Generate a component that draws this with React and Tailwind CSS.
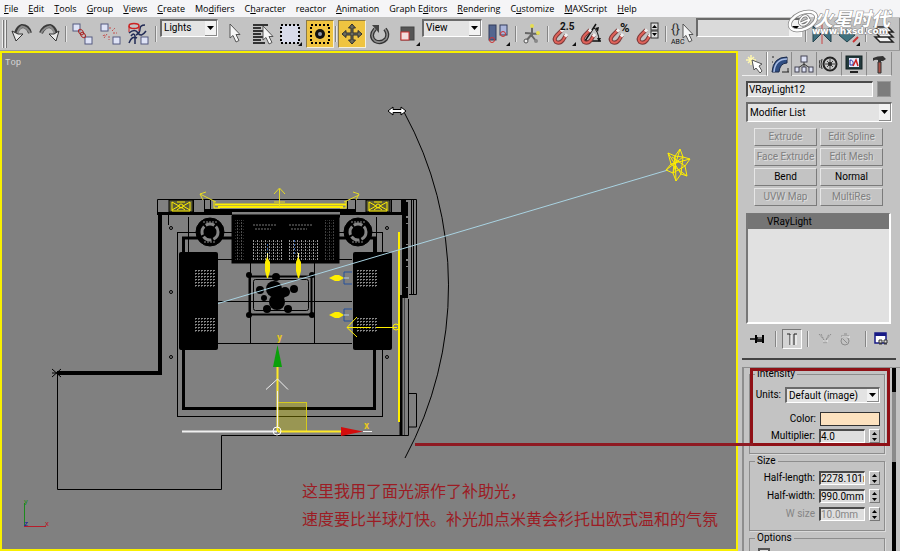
import { useState } from "react";
import clsx from "clsx";

const MENUS = [
  ["F", "ile"],
  ["E", "dit"],
  ["T", "ools"],
  ["G", "roup"],
  ["V", "iews"],
  ["C", "reate"],
  ["", "Mo", "d", "ifiers"],
  ["", "C", "h", "aracter"],
  ["", "reactor"],
  ["A", "nimation"],
  ["", "Graph E", "d", "itors"],
  ["R", "endering"],
  ["", "C", "u", "stomize"],
  ["M", "AXScript"],
  ["H", "elp"],
];

const MODIFIERS = [
  { name: "Extrude", enabled: false },
  { name: "Edit Spline", enabled: false },
  { name: "Face Extrude", enabled: false },
  { name: "Edit Mesh", enabled: false },
  { name: "Bend", enabled: true },
  { name: "Normal", enabled: true },
  { name: "UVW Map", enabled: false },
  { name: "MultiRes", enabled: false },
];

/* ---------- small controls ---------- */

function Separator({ className = "w-1" }) {
  return (
    <div className={clsx("flex h-4 shrink-0 justify-center", className)}>
      <div className="w-px bg-[#858585]" />
      <div className="w-px bg-[#e8e8e8]" />
    </div>
  );
}

function ToolButton({ label, active, className = "w-7", children }) {
  return (
    <button
      type="button"
      aria-label={label}
      className={clsx(
        "flex h-7 shrink-0 items-center justify-center",
        active && "border border-[#8c7a45] border-r-[#f4f0dc] border-b-[#f4f0dc] bg-[#efc441]",
        className
      )}
    >
      <svg width="24" height="24" viewBox="0 0 24 24" fill="none" className="shrink-0 overflow-visible">
        {children}
      </svg>
    </button>
  );
}

function Select({ label, options, className }) {
  return (
    <div
      className={clsx(
        "relative shrink-0 border-t-2 border-l-2 border-[#6a6a6a] border-r border-b border-r-white border-b-white bg-[#e3e3e3]",
        className
      )}
    >
      <select aria-label={label} className="block h-full w-full appearance-none bg-transparent pl-0.5 leading-3 outline-none">
        {options.map((o) => (
          <option key={o}>{o}</option>
        ))}
      </select>
      <span className="pointer-events-none absolute inset-y-0 right-0 flex w-3 items-center justify-center border-r border-b border-[#8a8a8a] bg-[#f2f2f2]">
        <svg width="7" height="4" viewBox="0 0 7 4">
          <path d="M0 0h7L3.5 4z" fill="#000" />
        </svg>
      </span>
    </div>
  );
}

function Spinner({ label, value, disabled }) {
  const [val, setVal] = useState(value);
  return (
    <div className="flex h-[18px] items-center">
      <label
        htmlFor={label}
        className={clsx("flex-1 pr-1 text-right", disabled && "text-[#858585]")}
      >
        {label}
      </label>
      <input
        id={label}
        value={val}
        disabled={disabled}
        onChange={(e) => setVal(e.target.value)}
        className={clsx(
          "h-[14px] w-[46px] border-t-2 border-l-2 border-r border-b border-[#4a4a4a] border-r-white border-b-white bg-[#dedede] leading-3 outline-none",
          disabled && "text-[#858585]"
        )}
      />
      <div className="ml-1 flex h-[14px] w-[11px] flex-col border border-white border-r-[#777] border-b-[#777]">
        <button type="button" aria-label={`Increase ${label}`} className="flex flex-1 items-center justify-center">
          <svg width="5" height="3" viewBox="0 0 5 3"><path d="M0 3h5L2.5 0z" /></svg>
        </button>
        <button type="button" aria-label={`Decrease ${label}`} className="flex flex-1 items-center justify-center">
          <svg width="5" height="3" viewBox="0 0 5 3"><path d="M0 0h5L2.5 3z" /></svg>
        </button>
      </div>
    </div>
  );
}

function Group({ title, className, children }) {
  return (
    <fieldset className={clsx("border border-[#8d8d8d] px-1 shadow-[1px_1px_0_#dadada]", className)}>
      <legend className="ml-px px-0.5 leading-3">{title}</legend>
      {children}
    </fieldset>
  );
}

/* ---------- toolbar drawings ---------- */

const Flyout = () => <path d="M24 20v4h-4z" fill="#111" />;

const Box = ({ x, y }) => (
  <rect x={x} y={y} width="7" height="7" fill="#dfe3f6" stroke="#555a80" />
);

const Magnet = () => (
  <>
    <path d="M10 8L5 13Q1 17 4 20Q8 22 11 18L14 13" stroke="#7d3a3a" strokeWidth="4" />
    <path d="M10 8L5 13Q1 17 4 20Q8 22 11 18L14 13" stroke="#e0635a" strokeWidth="2" />
    <path d="M9 9.500L11 7.500M13 14.500L15 12" stroke="#f0f0f0" strokeWidth="3" />
  </>
);

const Arrow = ({ x = 0, y = 0 }) => (
  <path
    transform={`translate(${x} ${y})`}
    d="M0 0L0 14L3 11.500L6 18L9 16.500L6 10.500L10 10.500Z"
    fill="#f6f6f6"
    stroke="#555"
  />
);

function Toolbar() {
  return (
    <div className="flex h-[34px] shrink-0 items-center border-b border-[#9a9a9a] bg-[#c3c3c3]">
      <div className="flex h-7 w-2 shrink-0 gap-px pl-0.5">
        <div className="w-0.5 border-r border-[#777] bg-[#eee]" />
        <div className="w-0.5 border-r border-[#777] bg-[#eee]" />
      </div>
      <ToolButton label="Undo">
        <path d="M20 11Q18 4 12 4Q8 5 6 11" stroke="#3a3a3a" strokeWidth="4" />
        <path d="M20 11Q17 5 12 4.500Q9 6 7 12" stroke="#8b8b8b" strokeWidth="2" />
        <path d="M2 9L6 19L13 12L8 12Z" fill="#e8e8e8" stroke="#333" />
      </ToolButton>
      <ToolButton label="Redo">
        <path d="M3 11Q6 4 12 4Q16 5 18 11" stroke="#3a3a3a" strokeWidth="4" />
        <path d="M3 11Q7 5 12 4.500Q15 6 17 12" stroke="#8b8b8b" strokeWidth="2" />
        <path d="M21 9L18 19L11 12L16 12Z" fill="#e8e8e8" stroke="#333" />
      </ToolButton>
      <Separator />
      <ToolButton label="Select and Link">
        <Box x={3} y={2} />
        <Box x={15} y={15} />
        <ellipse cx="11" cy="10" rx="2" ry="3" stroke="#a92a2a" transform="rotate(-40 11 10)" />
        <ellipse cx="13" cy="13" rx="2" ry="3" stroke="#a92a2a" transform="rotate(-40 13 13)" />
      </ToolButton>
      <ToolButton label="Unlink Selection">
        <Box x={3} y={2} />
        <Box x={15} y={15} />
        <path d="M14 9l3-3M15 11h4M9 12l-3 4M11 14v4M12 7V4M7 13l-3 1" stroke="#c4504f" strokeDasharray="2 1" />
      </ToolButton>
      <ToolButton label="Bind to Space Warp">
        <path d="M3 11Q9 6 12 11T20 9M3 21Q6 13 11 16M19 3Q14 3 14 7T10 13M5 14Q8 10 9 14V22" stroke="#222b55" strokeWidth="1.500" />
        <ellipse cx="8" cy="4" rx="5" ry="2.500" stroke="#c22" strokeWidth="1.500" />
        <path d="M3 4v6M13 4v5" stroke="#c22" />
        <Box x={15} y={15} />
      </ToolButton>
      <Separator className="w-2" />
      <Select label="Selection filter" options={["Lights"]} className="mb-3 h-[18px] w-[58px]" />
      <ToolButton label="Select Object" className="w-8">
        <Arrow x={8} y={2} />
      </ToolButton>
      <ToolButton label="Select by Name" className="w-6">
        <path d="M3 3h15M3 6h8M3 9h11M3 12h8M3 15h11M3 18h8M3 21h12" stroke="#333" strokeWidth="2" />
        <Arrow x={13} y={4} />
      </ToolButton>
      <ToolButton label="Selection Region" className="w-8">
        <rect x="3" y="3" width="18" height="18" fill="#d8dbea" stroke="#000" strokeWidth="2" strokeDasharray="2 2" />
        <Flyout />
      </ToolButton>
      <ToolButton label="Window / Crossing" active>
        <rect x="3" y="3" width="18" height="18" stroke="#000" strokeWidth="2" strokeDasharray="2 2" />
        <circle cx="12" cy="12" r="5" fill="#111" />
        <circle cx="12" cy="12" r="2" fill="#8d97a8" />
      </ToolButton>
      <Separator />
      <ToolButton label="Select and Move" active>
        <path
          d="M12 2L15.500 6H13V11H18V8.500L22 12L18 15.500V13H13V18H15.500L12 22L8.500 18H11V13H6V15.500L2 12L6 8.500V11H11V6H8.500Z"
          fill="#6b6b5c"
          stroke="#2f2f2f"
        />
      </ToolButton>
      <ToolButton label="Select and Rotate">
        <path d="M7 7Q1 14 7 19Q13 22 18 17Q21 12 17 7" stroke="#333" strokeWidth="4" />
        <path d="M7 7Q1 14 7 19Q13 22 18 17Q21 12 17 7" stroke="#8e8e8e" strokeWidth="1.500" />
        <path d="M4 3L11 3L11 11Z" fill="#444" />
      </ToolButton>
      <ToolButton label="Select and Scale">
        <rect x="5" y="5" width="13" height="13" fill="#555" stroke="#444" />
        <rect x="5" y="10" width="8" height="8" fill="#f2dede" stroke="#c33" />
        <Flyout />
      </ToolButton>
      <Select label="Reference coordinate system" options={["View"]} className="mb-3 h-[18px] w-[60px]" />
      <ToolButton label="Use Pivot Point Center" className="w-8">
        <rect x="3" y="3" width="7" height="15" fill="#53658f" stroke="#333c5c" />
        <rect x="14" y="3" width="7" height="10" fill="#aab5db" stroke="#333c5c" />
        <circle cx="6" cy="18" r="2.500" stroke="#c33" />
        <circle cx="17" cy="12" r="2.500" stroke="#c33" />
        <Flyout />
      </ToolButton>
      <Separator />
      <ToolButton label="Select and Manipulate">
        <path d="M12 4V15M12 12L6 19M5 11l14 1M12 14l4 5" stroke="#666" strokeWidth="2" />
        <circle cx="12" cy="4" r="2" fill="#e6dd51" />
        <circle cx="18" cy="11" r="2" fill="#e6dd51" />
        <circle cx="6" cy="19" r="2" fill="#eee" stroke="#555" />
        <circle cx="16" cy="19" r="2" fill="#888" />
      </ToolButton>
      <Separator />
      <ToolButton label="Snaps Toggle">
        <Magnet />
        <text x="8" y="8" fontSize="10" fontWeight="bold" fill="#111">2.5</text>
        <Flyout />
      </ToolButton>
      <ToolButton label="Angle Snap Toggle">
        <path d="M16 2L5 19H21" stroke="#111" strokeWidth="1.500" />
        <path d="M13 5Q19 10 19 19" stroke="#111" />
        <path d="M15 6l4-1-1 5zM17 16h4l-2 4z" fill="#111" />
        <Magnet />
      </ToolButton>
      <ToolButton label="Percent Snap Toggle">
        <Magnet />
        <text x="12" y="10" fontSize="13" fontWeight="bold" fill="#111">%</text>
      </ToolButton>
      <ToolButton label="Spinner Snap Toggle">
        <Magnet />
        <rect x="15" y="1" width="7" height="7" fill="#ddd" stroke="#333" />
        <rect x="15" y="9" width="7" height="7" fill="#ddd" stroke="#333" />
        <path d="M16 6h5L18.500 3zM16 11h5l-2.500 3z" fill="#000" />
      </ToolButton>
      <Separator className="w-2" />
      <ToolButton label="Edit Named Selection Sets" className="w-6">
        <text x="1" y="11" fontSize="13" fill="#333">{"{}"}</text>
        <text x="1" y="22" fontSize="7" fill="#111">ABC</text>
        <Arrow x={13} y={2} />
      </ToolButton>
      <div className="relative mb-3 ml-0.5 h-[19px] min-w-0 flex-1 border-t-2 border-l-2 border-[#6a6a6a] border-r border-b border-r-white border-b-white bg-[#dadada]">
        <input aria-label="Named selection sets" className="block h-full w-full bg-transparent px-1 outline-none" />
        <span className="pointer-events-none absolute inset-y-0 right-0 flex w-3 items-center justify-center bg-[#f2f2f2]">
          <svg width="7" height="4" viewBox="0 0 7 4"><path d="M0 0h7L3.500 4z" /></svg>
        </span>
      </div>
      <Separator className="w-2" />
      <ToolButton label="Mirror" className="w-6">
        <path d="M3 4L11 12L3 20Z" fill="#3f6d7c" stroke="#24454f" />
        <path d="M21 4L13 12L21 20Z" fill="#3f6d7c" stroke="#24454f" />
        <path d="M12 2V22" stroke="#c44" />
      </ToolButton>
      <ToolButton label="Align">
        <path d="M3 13L10 7L19 13L11 20Z" fill="#3f7380" stroke="#24454f" />
        <path d="M17 20L22 15" stroke="#c33" strokeWidth="2" />
        <Flyout />
      </ToolButton>
      <Separator className="w-2" />
      <ToolButton label="Layer Manager">
        <path d="M3 15L8 20H21L16 15ZM3 10L8 15H21L16 10ZM3 5L8 10H21L16 5Z" fill="#f2f2f2" stroke="#222" strokeWidth="1.500" />
      </ToolButton>
      <div className="ml-px h-8 w-px shrink-0 bg-[#888]" />
    </div>
  );
}

/* ---------- site stamp over the toolbar ---------- */

function Watermark() {
  return (
    <svg
      className="pointer-events-none absolute top-[6px] right-0 overflow-visible"
      width="112"
      height="32"
      viewBox="0 0 112 32"
      fill="none"
    >
      <g transform="rotate(-24 15 15)">
        <ellipse cx="15" cy="15" rx="14" ry="8" stroke="#858585" strokeWidth="4" />
        <ellipse cx="15" cy="15" rx="14" ry="8" stroke="#fff" strokeWidth="2.500" />
        <path d="M12 16H21Q22 10 16 11Q9 14 12 18Q16 21 22 16" stroke="#777" strokeWidth="3" />
        <path d="M12 16H21Q22 10 16 11Q9 14 12 18Q16 21 22 16" stroke="#fff" strokeWidth="1.500" />
      </g>
      <text
        x="26"
        y="20"
        fontSize="19"
        fontStyle="italic"
        fontWeight="bold"
        fill="#fff"
        stroke="#888"
        strokeWidth="1"
        paintOrder="stroke"
        className="font-['Noto_Sans_CJK_SC',sans-serif]"
      >
        火星时代
      </text>
      <text
        x="24"
        y="28"
        fontSize="9"
        fontWeight="bold"
        fill="#fff"
        stroke="#8a8a8a"
        strokeWidth="1"
        paintOrder="stroke"
        className="font-['DejaVu_Sans',sans-serif]"
      >
        www.hxsd.com
      </text>
    </svg>
  );
}

/* ---------- top viewport ---------- */

function Lamp({ x, y }) {
  return (
    <g>
      <circle cx={x} cy={y} r="14" fill="#000" />
      <circle cx={x} cy={y} r="8" fill="none" stroke="#858585" strokeWidth="3" strokeDasharray="9 2" />
      <path d={`M${x - 6} ${y + 10}h12M${x - 7} ${y - 10}h14`} stroke="#8a8a8a" strokeDasharray="2 1" />
      <circle cx={x} cy={y} r="3" fill="#000" />
    </g>
  );
}

function Sofa({ x, weaveX }) {
  return (
    <g>
      <rect x={x} y="252" width="39" height="98" rx="2" fill="#000" />
      <rect x={weaveX} y="269" width="20" height="18" fill="url(#weave)" />
      <rect x={weaveX} y="317" width="20" height="16" fill="url(#weave)" />
    </g>
  );
}

function DownLight({ x }) {
  return (
    <g>
      <path d={`M${x}.5 253v6`} stroke="#fff8a0" />
      <path d={`M${x} 257l3 5v9l-2 7h-1l-2-7v-9z`} fill="#ffee00" stroke="none" />
    </g>
  );
}

function SideLight({ y }) {
  return (
    <g>
      <path d={`M352 ${y - 6}h-8v12h8`} stroke="#24509c" fill="none" />
      <path d={`M329 ${y}l6-3h4l5 3-5 3h-4z`} fill="#ffee00" stroke="none" />
      <path d={`M344 ${y}h5`} stroke="#b9cfe4" />
    </g>
  );
}

function CeilingLight({ x }) {
  return (
    <g>
      <rect x={x - 12} y="200" width="24" height="12" fill="#5c5c38" stroke="#000" />
      <path
        d={`M${x - 9} 202v9h18v-9M${x - 9} 202l7 4-7 4M${x + 9} 202l-7 4 7 4M${x - 4} 202h8M${x - 4} 210l4-3 4 3`}
        stroke="#ffee00"
        fill="none"
      />
      <circle cx={x} cy="206" r="2" stroke="#ffee00" fill="none" />
    </g>
  );
}

function Scene() {
  return (
    <svg
      className="absolute inset-0 h-full w-full"
      viewBox="2 53 734 496"
      preserveAspectRatio="xMinYMin meet"
      fill="none"
      stroke="#000"
      strokeWidth="1"
    >
      <defs>
        <pattern id="weave" width="3" height="3" patternUnits="userSpaceOnUse">
          <rect width="2" height="1" x="0" y="0" fill="#8a8a8a" stroke="none" />
          <rect width="1" height="1" x="0" y="1" fill="#555" stroke="none" />
        </pattern>
        <pattern id="mesh" width="4" height="3" patternUnits="userSpaceOnUse">
          <rect width="1" height="2" x="1" y="0" fill="#9a9a9a" stroke="none" />
          <rect width="1" height="1" x="3" y="1" fill="#555" stroke="none" />
        </pattern>
      </defs>

      {/* outer walls */}
      <path d="M157.500 214V199.500H416.500V294.500H409M169.500 200v13M193.500 200v13M204.500 200v13M210.500 200v13M347.500 200v13M355.500 200v13M366.500 200v13M391.500 200v13M401.500 200v13" />
      <path d="M157 213.500H232M340 213.500H404" strokeWidth="3" />
      <path d="M160 213V373H57" strokeWidth="4" />
      <path d="M205 210.500H355M232 216H340" strokeWidth="3" />
      <path d="M57.500 373V489.500H221.500V435.500H408.500V299M416.500 393.500H408.500M408.500 427H416.500V393.500" />
      <path d="M52 369l9 8M61 369l-9 8M52 373h9" />
      <path d="M404 200V298" strokeWidth="4" />
      <path d="M407 202V298" strokeWidth="2" strokeDasharray="14 2 5 1 20 1" />
      <path d="M411.500 200V294M413.500 200V294" />
      <path d="M401 295V435" strokeWidth="3" />
      <path d="M404.500 298V435" stroke="#444" />

      {/* floor outline */}
      <rect x="177.500" y="232.500" width="205" height="184" />
      <rect x="183.500" y="238" width="191" height="170.500" strokeWidth="3" />
      <path d="M188.500 217V252M168.500 214V225M376.500 217V252M218 259.500H352M218 301.500H352M218 343.500H352M250.500 263V343M314.500 263V343" />
      {[[171, 228], [171, 292], [171, 357], [387, 228], [387, 357]].map(([x, y]) => (
        <circle key={`${x}-${y}`} cx={x} cy={y} r="1.500" />
      ))}

      {/* furniture */}
      <rect x="232" y="216" width="107" height="47" fill="#000" />
      <rect x="235" y="220" width="9" height="40" fill="url(#mesh)" stroke="none" opacity="0.5" />
      <rect x="253" y="239" width="30" height="22" fill="url(#mesh)" stroke="none" />
      <rect x="288" y="239" width="30" height="22" fill="url(#mesh)" stroke="none" />
      <path d="M253 225h24M289 225h24M255 229h16M291 229h16" stroke="#777" strokeDasharray="2 1" />
      <path d="M267.500 244v14M294.500 240v16" stroke="#315ea5" strokeDasharray="2 2" />
      <rect x="325" y="220" width="10" height="40" fill="url(#mesh)" stroke="none" opacity="0.4" />
      <Lamp x={210} y={232} />
      <Lamp x={358} y={232} />
      <g stroke="none">
        <Sofa x={179} weaveX={195} />
        <Sofa x={353} weaveX={357} />
      </g>
      <rect x="249.500" y="276.500" width="62" height="38" strokeWidth="2" />
      <rect x="253.500" y="279.500" width="55" height="31" rx="2" />
      <g fill="#000" stroke="none">
        {[[249, 275, 3], [312, 275, 3], [249, 315, 3], [312, 315, 3], [276, 277, 4], [260, 290, 4], [274, 289, 8], [285, 292, 5], [294, 289, 4], [264, 298, 3], [277, 302, 8], [267, 309, 4], [288, 309, 4], [281, 294, 5]].map(
          ([x, y, r]) => (
            <circle key={`${x}-${y}`} cx={x} cy={y} r={r} />
          )
        )}
      </g>

      {/* photometric lights */}
      <path d="M215 204.500H346M218 207H343" stroke="#ffee00" strokeWidth="2" />
      <path d="M214 201V208H220M346 201V208H340" stroke="#ffee00" />
      <path d="M279.500 207V189M274 194l5.500-6 5.500 6M274 202h11" stroke="#e6db24" />
      <path d="M216 202L200 194M206 192l-6 2 3 6M344 202L359 195M353 192l6 2-3 6" stroke="#e6db24" />
      <CeilingLight x={181} />
      <CeilingLight x={378} />
      <DownLight x={267} />
      <DownLight x={298} />
      <SideLight y={278} />
      <SideLight y={315} />
      <path d="M399 232V422" stroke="#ffee00" strokeWidth="2" />
      <path d="M347 327.500H371M376 327.500H397M357 317L347 327.500L357 337" stroke="#ffee00" />
      <circle cx="396" cy="327" r="3" stroke="#ffee00" />

      {/* light cone and target line */}
      <path d="M404 112A362 362 0 0 1 405 458" />
      <path d="M218 303.500L668 170" stroke="#a9d3e2" />
      <g stroke="#ffee00">
        <path d="M668 153L675 156L680 149L683 157L690 159L685 166L687 176L681 174L676 181L673 173L666 170L671 164Z" />
        <path d="M668 153L681 174M680 149L673 173M690 159L671 164M666 170L683 157M676 181L675 156M687 176L671 164" />
        <path d="M672 157L685 166L673 173L675 156L683 157L681 174" />
      </g>

      {/* resize cursor */}
      <path d="M388 111l5-4v2.500h8V107l5 4-5 4v-2.500h-8V115z" fill="#fff" />

      {/* move gizmo */}
      <rect x="277.500" y="402.500" width="29" height="29" fill="#c8c000" fillOpacity="0.35" stroke="#d4ca1c" />
      <path d="M182 431.500H277" stroke="#f0f0f0" strokeWidth="2" />
      <path d="M277.500 431V366M278 431.500H342" stroke="#ffe926" strokeWidth="2" />
      <path d="M277.500 427V391M266 389.500L277.500 379L288 389.500M363 431.500h9" stroke="#f0f0f0" />
      <circle cx="277" cy="431" r="4" stroke="#fff" />
      <path d="M277.500 345L282 367H273Z" fill="#0aa00a" stroke="none" />
      <path d="M363 431.500L341 427V436Z" fill="#d40d0d" stroke="none" />
      <g stroke="none" fill="#e8c71e" fontSize="10" fontWeight="bold">
        <text x="277" y="341">y</text>
        <text x="364" y="429">x</text>
      </g>

      {/* world axis */}
      <path d="M24.500 526V503" stroke="#1c8a1c" />
      <path d="M24 526.500H46" stroke="#b81c2a" />
      <g stroke="none" fontSize="8">
        <text x="24" y="504" fill="#1c8a1c">y</text>
        <text x="45" y="526" fill="#b81c2a">x</text>
        <text x="24" y="526" fill="#14149a">z</text>
      </g>
    </svg>
  );
}

function Viewport() {
  return (
    <section className="relative min-w-0 flex-1 border-2 border-[#f8f000] bg-[#808080]">
      <Scene />
      <span className="absolute top-0.5 left-[3px] font-['Liberation_Mono',monospace] text-[9px] leading-4 text-[#d8d8d8]">
        Top
      </span>
      <p className="absolute top-[423px] left-[300px] font-['Noto_Sans_CJK_SC',sans-serif] text-base leading-7 whitespace-nowrap text-[#9c1c24]">
        这里我用了面光源作了补助光，
        <br />
        速度要比半球灯快。补光加点米黄会衫托出欧式温和的气氛
      </p>
    </section>
  );
}

/* ---------- command panel ---------- */

const TABS = [
  {
    label: "Create",
    art: (
      <>
        <path d="M7 1v10M2 6h10M4 3l6 6M10 3l-6 6" stroke="#fff8b0" strokeWidth="1.500" />
        <path d="M8 6L10 16L12 14L16 19L18 17L15 12L18 10Z" fill="#fff" stroke="#555" />
      </>
    ),
  },
  {
    label: "Modify",
    active: true,
    art: (
      <>
        <path d="M2 18Q3 3 17 3V9Q10 9 9 18Z" fill="#2f4d82" stroke="#1c2b4b" />
        <path d="M4 18Q5 5 17 5" stroke="#a9bde4" strokeWidth="1.500" />
        <path d="M2 3h2M2 8h1M18 14v4M12 18h7" stroke="#222" />
      </>
    ),
  },
  {
    label: "Hierarchy",
    art: (
      <>
        <path d="M10 8v5M4 14l6-4 6 4" stroke="#333" />
        <rect x="7" y="2" width="6" height="6" fill="#dfe3f6" stroke="#445" />
        <rect x="1" y="13" width="4" height="5" fill="#dfe3f6" stroke="#445" />
        <rect x="8" y="13" width="4" height="5" fill="#dfe3f6" stroke="#445" />
        <rect x="15" y="13" width="4" height="5" fill="#dfe3f6" stroke="#445" />
      </>
    ),
  },
  {
    label: "Motion",
    art: (
      <>
        <circle cx="11" cy="10" r="6.500" fill="#c8c8c8" stroke="#222" strokeWidth="2" />
        <path d="M11 5v10M6 10h10M8 7l6 6M14 7l-6 6" stroke="#444" />
        <circle cx="11" cy="10" r="2" fill="#222" />
        <path d="M3 5Q1 10 3 15M1 6Q-1 10 1 14" stroke="#333" />
      </>
    ),
  },
  {
    label: "Display",
    art: (
      <>
        <rect x="2" y="2" width="16" height="13" fill="#233a3d" stroke="#132022" />
        <rect x="5" y="4" width="10" height="9" fill="#e9ebfb" />
        <path d="M6 6v5M6 6q4 0 3 5H6" stroke="#2737a6" />
        <path d="M9 12l3-6 2 6" stroke="#c22" strokeWidth="1.500" />
        <path d="M6 18h8" stroke="#222" strokeWidth="2" />
      </>
    ),
  },
  {
    label: "Utilities",
    art: (
      <>
        <path d="M4 7V4Q8 2 14 2L17 5L14 7H12V8H9V6Q6 5 4 7Z" fill="#333" />
        <path d="M9 8h3v11H9Z" fill="#a85248" stroke="#333" />
      </>
    ),
  },
];

function PanelTabs() {
  return (
    <div className="flex h-[25px] shrink-0 pt-px pl-1" role="tablist">
      {TABS.map((t) => (
        <button
          key={t.label}
          type="button"
          role="tab"
          aria-label={t.label}
          aria-selected={!!t.active}
          className={clsx(
            "flex w-[25px] items-center justify-center border-r border-[#8a8a8a]",
            !t.active && "border-b border-b-[#eee]",
            t.active && "border-l border-l-white"
          )}
        >
          <svg width="20" height="20" viewBox="0 0 20 20" fill="none">
            {t.art}
          </svg>
        </button>
      ))}
    </div>
  );
}

function StackTools() {
  return (
    <div className="mt-1 flex h-[22px] shrink-0 items-center pl-3">
      <button type="button" aria-label="Pin Stack" className="mr-2 w-4">
        <svg width="16" height="12" viewBox="0 0 16 12" fill="none">
          <path d="M0 6h6" stroke="#000" strokeWidth="1.500" />
          <path d="M6 2v8M13 2v8" stroke="#000" strokeWidth="2" />
          <path d="M7 4h5v5H7z" fill="#222" />
          <path d="M8 5h4" stroke="#aaa" />
        </svg>
      </button>
      <Separator />
      <button
        type="button"
        aria-label="Show end result"
        aria-pressed="true"
        className="ml-1 flex h-5 w-5 items-center justify-center border border-[#777] border-r-white border-b-white bg-[#d4d4d4]"
      >
        <svg width="12" height="14" viewBox="0 0 12 14" fill="none">
          <path d="M1 2h3v11M8 13V2h3" stroke="#222" />
          <path d="M5 3v10M10 3v10" stroke="#fff" />
        </svg>
      </button>
      <Separator className="ml-1 w-1" />
      <button type="button" aria-label="Make unique" disabled className="ml-2 w-4">
        <svg width="14" height="14" viewBox="0 0 14 14" fill="none">
          <path d="M1 2l5 6v4M13 2L8 8v4M3 2l4 8 4-8" stroke="#8c8c8c" strokeDasharray="2 1" />
          <path d="M5 9h5" stroke="#eee" />
        </svg>
      </button>
      <button type="button" aria-label="Remove modifier" disabled className="ml-1 w-4">
        <svg width="14" height="14" viewBox="0 0 14 14" fill="none">
          <circle cx="7" cy="9" r="4" stroke="#8c8c8c" />
          <path d="M3 4h8M6 2h3M5 7l4 4" stroke="#8c8c8c" />
          <path d="M4 5h8" stroke="#eee" />
        </svg>
      </button>
      <Separator className="ml-2 w-2" />
      <button type="button" aria-label="Configure Modifier Sets" className="ml-1 w-4">
        <svg width="15" height="14" viewBox="0 0 15 14" fill="none">
          <rect x="1" y="1" width="11" height="10" fill="#fff" stroke="#171a86" strokeWidth="1.500" />
          <path d="M1 2.500h11" stroke="#171a86" strokeWidth="3" />
          <path d="M5 8h3v3h-3zM10 8h3v3h-3zM5 12h3M10 12h3" stroke="#333" fill="#ddd" />
        </svg>
      </button>
    </div>
  );
}

function Rollout() {
  return (
    <div className="relative mt-[7px] ml-1 flex min-h-0 flex-1 border-t border-l-2 border-[#8d8d8d]">
      <div className="min-w-0 flex-1 pl-[5px]">
        <Group title="Intensity" className="h-[86px]">
          <div className="mt-[7px] flex items-center justify-end gap-1">
            <span>Units:</span>
            <Select label="Units" options={["Default (image)"]} className="h-4 w-[95px]" />
          </div>
          <div className="mt-2 flex h-4 items-center justify-end gap-1">
            <span>Color:</span>
            <button type="button" aria-label="Light color" className="h-[14px] w-[60px] border border-[#333] bg-[#fde2bf]" />
          </div>
          <Spinner label="Multiplier:" value="4.0" />
        </Group>
        <Group title="Size" className="mt-px h-[76px]">
          <div className="mt-0.5">
            <Spinner label="Half-length:" value="2278.101mm" />
            <Spinner label="Half-width:" value="990.0mm" />
            <Spinner label="W size" value="10.0mm" disabled />
          </div>
        </Group>
        <Group title="Options" className="mt-px h-20">
          <input type="checkbox" aria-label="Double-sided" className="mt-1 ml-1 block h-3 w-3 appearance-none border-2 border-[#555] bg-[#ddd]" />
        </Group>
      </div>
      {/* scroll track */}
      <div className="mr-1 ml-[7px] flex w-1 flex-col bg-black">
        <div className="mt-6 h-[70px] bg-[#8a8a8a]" />
      </div>
      {/* callout drawn over the intensity group */}
      <div className="pointer-events-none absolute top-0 right-[10px] left-[6px] h-[78px] border-[3px] border-[#8f1016]">
        <div className="absolute right-full -bottom-[3px] h-[3px] w-[338px] bg-[#8f1a22]" />
      </div>
    </div>
  );
}

function CommandPanel() {
  const [name, setName] = useState("VRayLight12");
  return (
    <aside className="flex w-[162px] shrink-0 flex-col bg-[#c3c3c3]">
      <PanelTabs />
      <div className="mt-[5px] flex shrink-0 items-center gap-1 pr-[9px] pl-2">
        <input
          aria-label="Object name"
          value={name}
          onChange={(e) => setName(e.target.value)}
          className="h-4 min-w-0 flex-1 border-t-2 border-l-2 border-r border-b border-[#4a4a4a] border-r-white border-b-white bg-[#e3e3e3] px-px outline-none"
        />
        <button type="button" aria-label="Object color" className="h-4 w-[14px] border border-[#999] bg-[#7c7c7c]" />
      </div>
      <Select label="Modifier List" options={["Modifier List"]} className="mt-[5px] mr-2 ml-2 h-5" />
      <div className="mt-1.5 mr-[17px] ml-4 grid shrink-0 grid-cols-2 gap-x-[3px] gap-y-0.5">
        {MODIFIERS.map((m) => (
          <button
            key={m.name}
            type="button"
            disabled={!m.enabled}
            className="h-[18px] border border-[#e6e6e6] border-r-[#7b7b7b] border-b-[#7b7b7b] leading-3 whitespace-nowrap disabled:text-[#808080] disabled:[text-shadow:1px_1px_0_#dedede]"
          >
            {m.name}
          </button>
        ))}
      </div>
      <ul className="mt-[7px] mr-[9px] ml-2 h-[111px] shrink-0 border-2 border-t border-[#777] border-r-white border-b-white bg-[#e1e1e1]">
        <li className="h-[15px] bg-[#757575] pl-[19px] leading-[15px]">VRayLight</li>
      </ul>
      <StackTools />
      <div className="mt-2 mr-1 ml-1 h-0.5 shrink-0 bg-[#444]" />
      <Rollout />
    </aside>
  );
}

export default function App() {
  return (
    <div className="relative flex h-screen flex-col overflow-hidden bg-[#c3c3c3] font-['Roboto',sans-serif] text-[10px] leading-3 text-black">
      <nav className="flex h-[17px] shrink-0 items-center gap-2.5 bg-[#f5f5f7] pl-1 font-['Open_Sans',sans-serif] text-[9px] leading-4">
        {MENUS.map(([key, text, mid, rest]) => (
          <a key={key + text + (rest || "")} href="#" className="whitespace-nowrap">
            {key && <span className="underline">{key}</span>}
            {text}
            {mid && <span className="underline">{mid}</span>}
            {rest}
          </a>
        ))}
      </nav>
      <Toolbar />
      <main className="flex min-h-0 flex-1">
        <Viewport />
        <CommandPanel />
      </main>
      <Watermark />
    </div>
  );
}
